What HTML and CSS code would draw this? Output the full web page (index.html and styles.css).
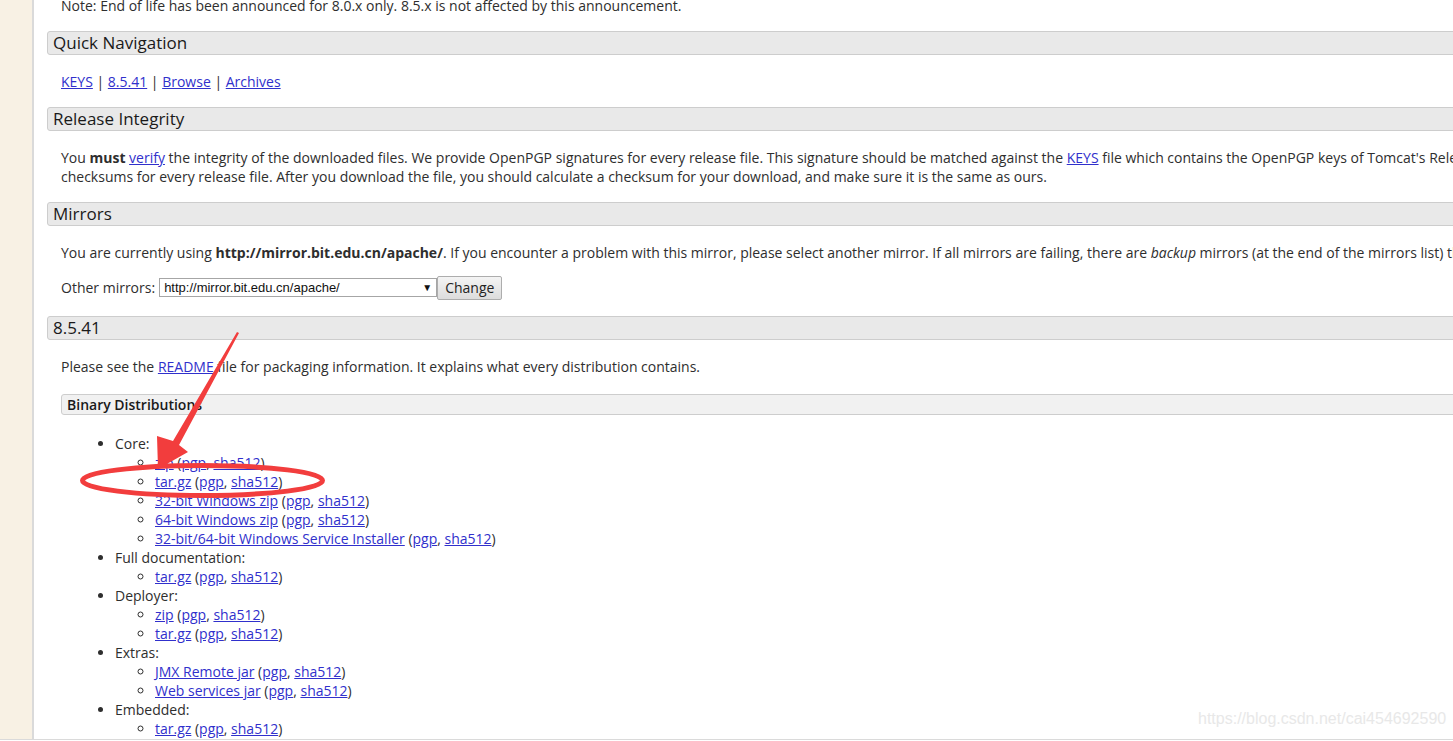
FILE: index.html
```html
<!DOCTYPE html>
<html lang="en">
<head>
    <meta charset="UTF-8">
    <title>Apache Tomcat 8 Software Downloads</title>
    <link rel="stylesheet" href="styles.css">
</head>
<body>
    <div class="page">
        <div class="side"></div>

        <div class="main">
            <div class="body">
                <p class="note">Note: End of life has been announced for 8.0.x only. 8.5.x is not affected by this announcement.</p>
            </div>

            <h3 class="bar">Quick Navigation</h3>
            <div class="body">
                <p><a href="#">KEYS</a> | <a href="#">8.5.41</a> | <a href="#">Browse</a> | <a href="#">Archives</a></p>
            </div>

            <h3 class="bar">Release Integrity</h3>
            <div class="body">
                <p class="wide">You <strong>must</strong> <a href="#">verify</a> the integrity of the downloaded files. We provide OpenPGP signatures for every release file. This signature should be matched against the <a href="#">KEYS</a> file which contains the OpenPGP keys of Tomcat's Release Managers. We also provide SHA-512<br>checksums for every release file. After you download the file, you should calculate a checksum for your download, and make sure it is the same as ours.</p>
            </div>

            <h3 class="bar">Mirrors</h3>
            <div class="body">
                <p class="wide">You are currently using <strong>http://mirror.bit.edu.cn/apache/</strong>. If you encounter a problem with this mirror, please select another mirror. If all mirrors are failing, there are <em>backup</em> mirrors (at the end of the mirrors list) that should be available.</p>
                <form class="mirror-form">
                    <span class="label">Other mirrors:</span>
                    <span class="select-wrap">
                        <select class="mirror-select">
                            <option>http://mirror.bit.edu.cn/apache/</option>
                        </select>
                    </span>
                    <button type="button" class="change-btn">Change</button>
                </form>
            </div>

            <h3 class="bar">8.5.41</h3>
            <div class="body">
                <p>Please see the <a href="#">README</a> file for packaging information. It explains what every distribution contains.</p>

                <h4 class="subbar">Binary Distributions</h4>
                <div class="subbody">
                    <ul class="dist">
                        <li>Core:
                            <ul>
                                <li><a href="#">zip</a> (<a href="#">pgp</a>, <a href="#">sha512</a>)</li>
                                <li><a href="#">tar.gz</a> (<a href="#">pgp</a>, <a href="#">sha512</a>)</li>
                                <li><a href="#">32-bit Windows zip</a> (<a href="#">pgp</a>, <a href="#">sha512</a>)</li>
                                <li><a href="#">64-bit Windows zip</a> (<a href="#">pgp</a>, <a href="#">sha512</a>)</li>
                                <li><a href="#">32-bit/64-bit Windows Service Installer</a> (<a href="#">pgp</a>, <a href="#">sha512</a>)</li>
                            </ul>
                        </li>
                        <li>Full documentation:
                            <ul>
                                <li><a href="#">tar.gz</a> (<a href="#">pgp</a>, <a href="#">sha512</a>)</li>
                            </ul>
                        </li>
                        <li>Deployer:
                            <ul>
                                <li><a href="#">zip</a> (<a href="#">pgp</a>, <a href="#">sha512</a>)</li>
                                <li><a href="#">tar.gz</a> (<a href="#">pgp</a>, <a href="#">sha512</a>)</li>
                            </ul>
                        </li>
                        <li>Extras:
                            <ul>
                                <li><a href="#">JMX Remote jar</a> (<a href="#">pgp</a>, <a href="#">sha512</a>)</li>
                                <li><a href="#">Web services jar</a> (<a href="#">pgp</a>, <a href="#">sha512</a>)</li>
                            </ul>
                        </li>
                        <li>Embedded:
                            <ul>
                                <li><a href="#">tar.gz</a> (<a href="#">pgp</a>, <a href="#">sha512</a>)</li>
                            </ul>
                        </li>
                    </ul>
                </div>
            </div>
        </div>

        <!-- red marks drawn over the screenshot -->
        <svg class="marks" width="1453" height="741" viewBox="0 0 1453 741">
            <polygon points="237,332 239,333 179,445 188,452 158,469 157,436 173,441" fill="#f23d3d"/>
            <ellipse cx="202.5" cy="480.5" rx="120" ry="15" fill="none" stroke="#f23d3d" stroke-width="5"/>
        </svg>

        <div class="watermark">https://blog.csdn.net/cai454692590</div>
    </div>
</body>
</html>
```

FILE: styles.css
```css
html, body {
    margin: 0;
    overflow: hidden;
}

body {
    font-family: "Open Sans", "Liberation Sans", sans-serif;
    font-size: 14px;
    line-height: 19px;
    color: #2e2e2e;
    background: #fff;
}

.page {
    position: relative;
    display: flex;
    width: 1453px;
    height: 739px;
    overflow: hidden;
    border-bottom: 1px solid #dadada;
}

.side {
    flex: none;
    width: 32px;
    background: #f8f1e4;
    border-right: 2px solid #dadada;
}

.main {
    flex: none;
    width: 1600px;
    padding-left: 13px;
}

a {
    color: #3030cc;
}

.body {
    padding-left: 14px;
}

.body p {
    margin: 0 0 16px;
}

.body p.note {
    margin-top: -4px;
}

.wide {
    white-space: nowrap;
}

.bar {
    margin: 0 0 17px;
    height: 22px;
    line-height: 22px;
    padding-left: 5px;
    font-size: 17px;
    font-weight: normal;
    color: #1a1a1a;
    background: #e9e9e9;
    border: 1px solid #cdcdcd;
    border-radius: 3px;
}

.mirror-form {
    display: flex;
    align-items: center;
    height: 23px;
    margin: -2px 0 17px;
}

.label {
    margin-right: 4px;
}

.select-wrap {
    position: relative;
    display: inline-block;
}

.select-wrap::after {
    content: "\25BC";
    position: absolute;
    right: 5px;
    top: 3px;
    font-size: 10px;
    line-height: 13px;
    color: #111;
    pointer-events: none;
}

.mirror-select {
    appearance: none;
    -webkit-appearance: none;
    display: block;
    width: 278px;
    height: 19px;
    padding: 0 4px;
    border: 1px solid #a6a6a6;
    border-radius: 0;
    background: #fff;
    font-family: "Liberation Sans", Arial, sans-serif;
    font-size: 13px;
    color: #111;
}

.change-btn {
    height: 24px;
    padding: 0 7px;
    border: 1px solid #adadad;
    border-radius: 2px;
    background: linear-gradient(#f4f4f4, #dcdcdc);
    font-family: "Open Sans", sans-serif;
    font-size: 14px;
    color: #222;
}

.subbar {
    margin: 18px 0 0;
    height: 19px;
    line-height: 20px;
    padding-left: 5px;
    font-size: 14px;
    font-weight: 600;
    color: #1a1a1a;
    background: #f1f1f1;
    border: 1px solid #cdcdcd;
    border-radius: 3px;
}

.subbody {
    padding-left: 14px;
}

.dist {
    margin: 19px 0 0;
    padding-left: 40px;
    list-style: disc;
}

.dist ul {
    margin: 0;
    padding-left: 40px;
    list-style: circle;
}

.marks {
    position: absolute;
    left: 0;
    top: 0;
    pointer-events: none;
}

.watermark {
    position: absolute;
    left: 1198px;
    top: 709px;
    font-family: "Liberation Sans", Arial, sans-serif;
    font-size: 16px;
    color: #e8e8e8;
}
```
